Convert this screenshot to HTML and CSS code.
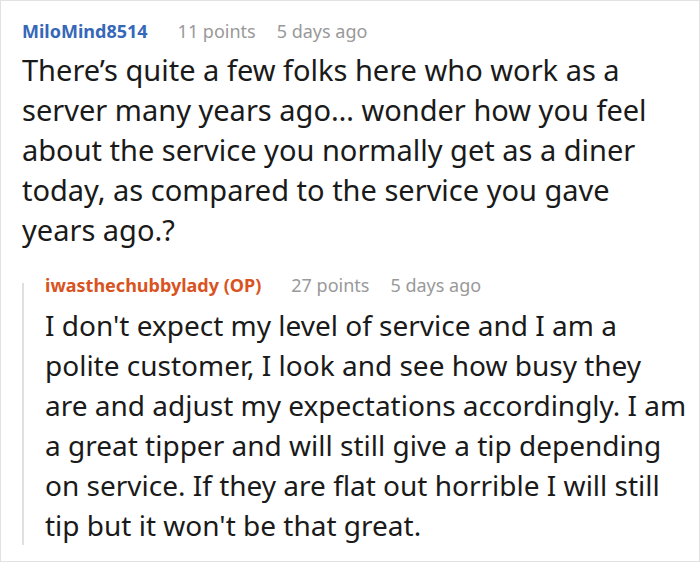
FILE: index.html
```html
<!DOCTYPE html>
<html>
<head>
<meta charset="utf-8">
<link rel="stylesheet" href="styles.css">
</head>
<body>
<div class="card">
  <div class="comment">
    <div class="meta">
      <span class="author">MiloMind8514</span>
      <span class="points">11 points</span>
      <span class="time">5 days ago</span>
    </div>
    <p class="body">There’s quite a few folks here who work as a server many years ago… wonder how you feel about the service you normally get as a diner today, as compared to the service you gave years ago.?</p>
  </div>
  <div class="reply">
    <div class="thread-line"></div>
    <div class="reply-content">
      <div class="meta">
        <span class="author op">iwasthechubbylady (OP)</span>
        <span class="points">27 points</span>
        <span class="time">5 days ago</span>
      </div>
      <p class="body">I don't expect my level of service and I am a polite customer, I look and see how busy they are and adjust my expectations accordingly. I am a great tipper and will still give a tip depending on service. If they are flat out horrible I will still tip but it won't be that great.</p>
    </div>
  </div>
</div>
</body>
</html>
```

FILE: styles.css
```css
html, body {
  margin: 0;
  padding: 0;
  background: #ffffff;
}
body {
  font-family: "Noto Sans", "Open Sans", sans-serif;
  color: #1a1a1a;
}
.card {
  box-sizing: border-box;
  width: 700px;
  height: 562px;
  border: 1px solid #e2e2e2;
  padding: 18px 11px 0 21px;
  overflow: hidden;
}
.meta {
  display: flex;
  align-items: baseline;
  font-size: 18px;
  line-height: 24px;
}
.author {
  font-weight: 700;
  color: #3667b8;
  margin-right: 30px;
}
.author.op {
  color: #d9531f;
}
.points {
  color: #999999;
  margin-right: 21px;
}
.time {
  color: #999999;
}
.body {
  margin: 7px 0 0 0;
  font-size: 29px;
  line-height: 40px;
}
.reply {
  display: flex;
  margin-top: 23px;
}
.thread-line {
  width: 2px;
  background: #e0e0e0;
  margin-top: 10px;
  margin-right: 21px;
  flex: none;
}
.reply-content {
  flex: 1;
}
.reply .body {
  margin-top: 8px;
  font-size: 28px;
}
```
